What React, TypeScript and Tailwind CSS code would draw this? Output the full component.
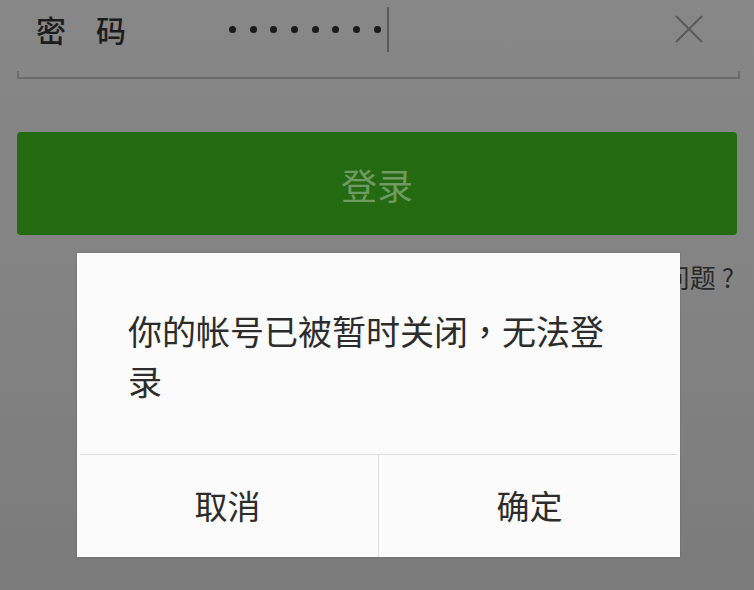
export default function App() {
  const font = { fontFamily: '"Noto Sans CJK SC", "Noto Sans", sans-serif' };
  const tc = { fontFamily: '"Noto Sans CJK TC", "Noto Sans CJK SC", sans-serif' };
  return (
    <div
      className="relative w-[754px] h-[590px] overflow-hidden bg-gradient-to-b from-[#878787] via-[#838383] to-[#7b7b7b]"
      style={font}
    >
      {/* password row */}
      <div className="flex h-[58px] items-center pl-[36px]">
        <span className="text-[30px] leading-[34px] font-medium text-[#1c1c1c]">密　码</span>
        <div className="ml-[103px] flex items-center gap-[13.7px]">
          {Array.from({ length: 8 }).map((_, i) => (
            <span key={i} className="block h-[7px] w-[7px] rounded-full bg-[#1a1a1a]" />
          ))}
        </div>
        <span className="ml-[6px] block h-[45px] w-[2px] bg-[#5a5a5a]" />
        <svg className="ml-auto mr-[51px]" width="28" height="28" viewBox="0 0 28 28">
          <path d="M1 1 L27 27 M27 1 L1 27" stroke="#5a5a5a" strokeWidth="2" fill="none" />
        </svg>
      </div>
      <div className="mt-[13px] ml-[17px] mr-[14px] h-[8px] border-x-2 border-b-2 border-[#6c6c6c]" />

      {/* login button */}
      <div className="mx-[17px] mt-[53px] flex h-[103px] items-center justify-center rounded-[4px] bg-[#246a10]">
        <span className="text-[36px] leading-[40px] text-[#6f9a62]">登录</span>
      </div>

      {/* help link */}
      <div className="mt-[22px] pr-[20px] text-right text-[26px] leading-[40px] text-[#2a2a2a]">
        登录遇到问题 ?
      </div>

      {/* dialog */}
      <div className="absolute left-[77px] top-[253px] flex h-[304px] w-[603px] flex-col bg-[#fbfbfb] shadow-[0_0_2px_rgba(0,0,0,0.2)]">
        <p className="flex-1 px-[51px] pt-[53px] text-[34px] leading-[50px] text-[#2c2c2c]" style={tc}>
          你的帐号已被暂时关闭，无法登录
        </p>
        <div className="mx-[3px] h-px bg-[#dedede]" />
        <div className="flex h-[102px]">
          <div className="flex flex-1 items-center justify-center text-[33px] text-[#2c2c2c]">取消</div>
          <div className="w-px bg-[#dedede]" />
          <div className="flex flex-1 items-center justify-center text-[33px] text-[#2c2c2c]">确定</div>
        </div>
      </div>
    </div>
  );
}
